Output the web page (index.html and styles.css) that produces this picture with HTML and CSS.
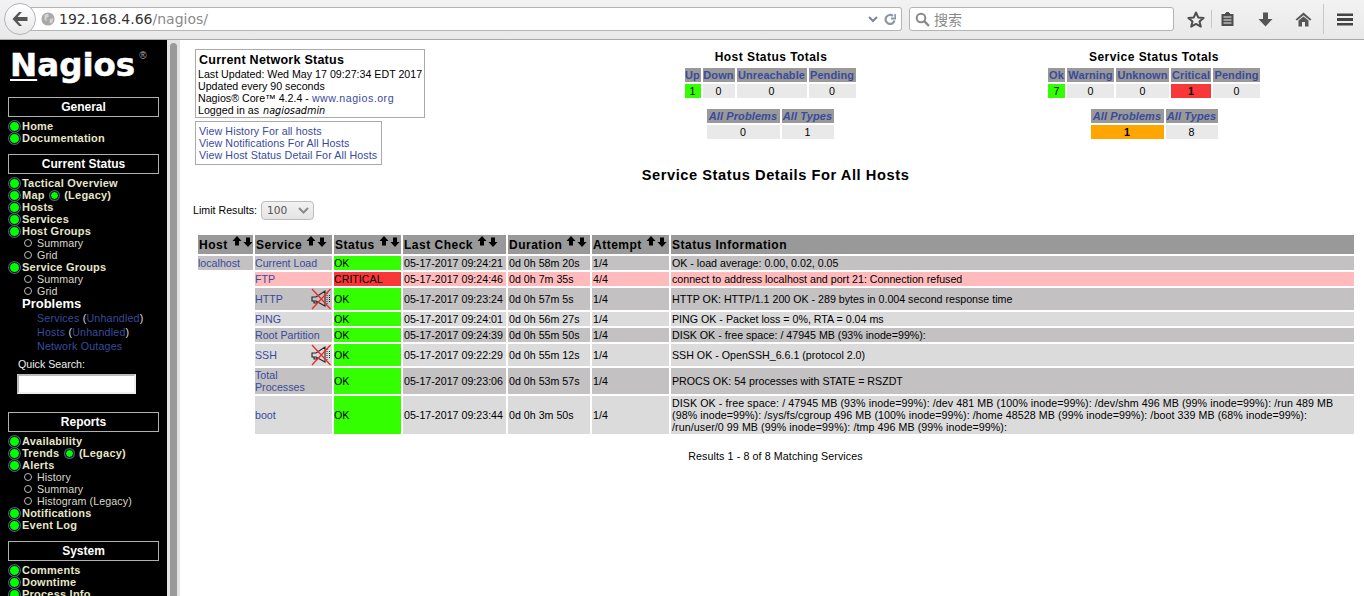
FILE: index.html
```html
<!DOCTYPE html>
<html lang="en">
<head>
<meta charset="utf-8">
<title>Nagios Core</title>
<link rel="stylesheet" href="styles.css">
</head>
<body>
<svg class="defs" width="0" height="0" aria-hidden="true">
  <defs>
    <symbol id="up" viewBox="0 0 10 10"><path d="M5 0 L9.5 5 H7 V9.5 H3 V5 H0.5 Z"/></symbol>
    <symbol id="down" viewBox="0 0 10 10"><path d="M3 0.5 H7 V5 H9.5 L5 10 L0.5 5 H3 Z"/></symbol>
    <symbol id="mute" viewBox="0 0 20 22">
      <path d="M1 9 H5 L14 3 V18 L5 13 H1 Z M3 13 V15 H6 V13" fill="none" stroke="#262626" stroke-width="1.1"/>
      <path d="M16 5 V17 M18.5 7 V15" fill="none" stroke="#262626" stroke-width="1" stroke-dasharray="1 1"/>
      <path d="M1 1 L19.5 21 M19.5 1 L1 21" stroke="#f02828" stroke-width="1.3" fill="none"/>
    </symbol>
  </defs>
</svg>

<header class="toolbar">
  <div class="backbtn">
    <svg width="18" height="16" viewBox="0 0 18 16"><path d="M8 1 L1.5 8 L8 15 H11 L6.5 10 H16.5 V6 H6.5 L11 1 Z" fill="#555"/></svg>
  </div>
  <div class="urlbar">
    <svg class="globe" width="14" height="14" viewBox="0 0 16 16"><circle cx="8" cy="8" r="7.5" fill="#a9a9a9"/><path d="M4 3 L8 2 L9 5 L6 7 L7 10 L4 9 Z M10 8 L14 7 L13 12 L10 13 Z" fill="#d4d4d4"/></svg>
    <span class="host">192.168.4.66</span><span class="path">/nagios/</span>
    <span class="urlend">
      <svg width="10" height="7" viewBox="0 0 10 7"><path d="M1 1 L5 5 L9 1" fill="none" stroke="#7d8691" stroke-width="2"/></svg>
      <svg width="12" height="13" viewBox="0 0 12 13"><path d="M10.5 7.5 A4.5 4.5 0 1 1 9 3 M7 5.5 H11.5 V1" fill="none" stroke="#8b97a6" stroke-width="2.2"/></svg>
    </span>
  </div>
  <div class="searchbar">
    <svg width="15" height="15" viewBox="0 0 15 15"><circle cx="6" cy="6" r="4.3" fill="none" stroke="#8a8a8a" stroke-width="2"/><path d="M9.2 9.2 L14 14" stroke="#8a8a8a" stroke-width="2.4"/></svg>
    <span>搜索</span>
  </div>
  <div class="tools">
    <svg class="t-star" width="18" height="17" viewBox="0 0 18 17"><path d="M9 1.5 L11.2 6.4 L16.6 6.9 L12.5 10.4 L13.8 15.6 L9 12.9 L4.2 15.6 L5.5 10.4 L1.4 6.9 L6.8 6.4 Z" fill="none" stroke="#4e4e4e" stroke-width="2" stroke-linejoin="round"/></svg>
    <i class="sep"></i>
    <svg class="t-clip" width="15" height="16" viewBox="0 0 15 16"><path d="M5 2 H6 V1 H9 V2 H10 V3 H13.5 V15 H1.5 V3 H5 Z" fill="#4e4e4e"/><path d="M3.5 6 H11.5 M3.5 9 H11.5 M3.5 12 H11.5" stroke="#eee" stroke-width="1"/></svg>
    <svg class="t-down" width="15" height="15" viewBox="0 0 15 15"><path d="M5 0.5 H10 V7 H14.5 L7.5 14.5 L0.5 7 H5 Z" fill="#555"/></svg>
    <svg class="t-home" width="17" height="15" viewBox="0 0 17 15"><path d="M8.5 0.5 L16.5 7.5 L15 8.5 L8.5 3.2 L2 8.5 L0.5 7.5 Z" fill="#555"/><path d="M3.5 8.5 L8.5 4.6 L13.5 8.5 V14.5 H10 V10 H7 V14.5 H3.5 Z" fill="#555"/></svg>
    <i class="sep tall"></i>
    <svg class="t-menu" width="16" height="13" viewBox="0 0 16 13"><path d="M0 0.5 H16 V3 H0 Z M0 5 H16 V8 H0 Z M0 10 H16 V12.5 H0 Z" fill="#444"/></svg>
  </div>
</header>

<div class="window">
  <nav class="sidebar">
    <div class="logo"><span class="logo-name"><span class="logo-n">N</span>agios</span><span class="logo-reg">®</span></div>

    <div class="navhead first">General</div>
    <ul class="navlist">
      <li class="bright"><a href="#">Home</a></li>
      <li class="bright"><a href="#">Documentation</a></li>
    </ul>

    <div class="navhead">Current Status</div>
    <ul class="navlist">
      <li class="bright"><a href="#">Tactical Overview</a></li>
      <li class="bright"><a href="#">Map</a> <b class="dot"></b> <a href="#">(Legacy)</a></li>
      <li class="bright"><a href="#">Hosts</a></li>
      <li class="bright"><a href="#">Services</a></li>
      <li class="bright"><a href="#">Host Groups</a></li>
      <li class="sub"><a href="#">Summary</a></li>
      <li class="sub"><a href="#">Grid</a></li>
      <li class="bright"><a href="#">Service Groups</a></li>
      <li class="sub"><a href="#">Summary</a></li>
      <li class="sub"><a href="#">Grid</a></li>
    </ul>
    <div class="problems">Problems</div>
    <ul class="plist">
      <li><a href="#">Services</a> (<a href="#">Unhandled</a>)</li>
      <li><a href="#">Hosts</a> (<a href="#">Unhandled</a>)</li>
      <li><a href="#">Network Outages</a></li>
    </ul>
    <div class="qs-label">Quick Search:</div>
    <input class="qs-input" type="text" aria-label="Quick Search">

    <div class="navhead reports">Reports</div>
    <ul class="navlist">
      <li class="bright"><a href="#">Availability</a></li>
      <li class="bright"><a href="#">Trends</a> <b class="dot"></b> <a href="#">(Legacy)</a></li>
      <li class="bright"><a href="#">Alerts</a></li>
      <li class="sub"><a href="#">History</a></li>
      <li class="sub"><a href="#">Summary</a></li>
      <li class="sub"><a href="#">Histogram (Legacy)</a></li>
      <li class="bright"><a href="#">Notifications</a></li>
      <li class="bright"><a href="#">Event Log</a></li>
    </ul>

    <div class="navhead system">System</div>
    <ul class="navlist">
      <li class="bright"><a href="#">Comments</a></li>
      <li class="bright"><a href="#">Downtime</a></li>
      <li class="bright"><a href="#">Process Info</a></li>
    </ul>
  </nav>
  <div class="scrollbar"><div class="thumb"></div></div>

  <main class="main">
    <section class="top">
      <div class="leftcol">
        <div class="infobox">
          <div class="infotitle">Current Network Status</div>
          <div>Last Updated: Wed May 17 09:27:34 EDT 2017</div>
          <div>Updated every 90 seconds</div>
          <div>Nagios® Core™ 4.2.4 - <a href="#">www.nagios.org</a></div>
          <div>Logged in as <i class="user">nagiosadmin</i></div>
        </div>
        <div class="linkbox">
          <div><a href="#">View History For all hosts</a></div>
          <div><a href="#">View Notifications For All Hosts</a></div>
          <div><a href="#">View Host Status Detail For All Hosts</a></div>
        </div>
      </div>

      <div class="totals">
        <div class="totals-title">Host Status Totals</div>
        <table class="tot tot-host">
          <tr><th><a href="#">Up</a></th><th><a href="#">Down</a></th><th><a href="#">Unreachable</a></th><th><a href="#">Pending</a></th></tr>
          <tr><td class="ok">1</td><td>0</td><td>0</td><td>0</td></tr>
        </table>
        <table class="tot tot-all">
          <tr><th><a href="#">All Problems</a></th><th><a href="#">All Types</a></th></tr>
          <tr><td>0</td><td>1</td></tr>
        </table>
      </div>

      <div class="totals">
        <div class="totals-title">Service Status Totals</div>
        <table class="tot tot-svc">
          <tr><th><a href="#">Ok</a></th><th><a href="#">Warning</a></th><th><a href="#">Unknown</a></th><th><a href="#">Critical</a></th><th><a href="#">Pending</a></th></tr>
          <tr><td class="ok">7</td><td>0</td><td>0</td><td class="crit"><b>1</b></td><td>0</td></tr>
        </table>
        <table class="tot tot-all">
          <tr><th><a href="#">All Problems</a></th><th><a href="#">All Types</a></th></tr>
          <tr><td class="warn"><b>1</b></td><td>8</td></tr>
        </table>
      </div>
    </section>

    <h1 class="pagetitle">Service Status Details For All Hosts</h1>

    <div class="limit">
      <label for="lim">Limit Results:</label>
      <div class="fakeselect" id="lim"><span>100</span><svg width="11" height="7" viewBox="0 0 11 7"><path d="M1 1 L5.5 5.5 L10 1" fill="none" stroke="#8a8a8a" stroke-width="2"/></svg></div>
    </div>

    <table class="status">
      <thead>
        <tr>
          <th class="c-host">Host <span class="sort"><svg><use href="#up"/></svg><svg><use href="#down"/></svg></span></th>
          <th class="c-svc">Service <span class="sort"><svg><use href="#up"/></svg><svg><use href="#down"/></svg></span></th>
          <th class="c-st">Status <span class="sort"><svg><use href="#up"/></svg><svg><use href="#down"/></svg></span></th>
          <th class="c-lc">Last Check <span class="sort"><svg><use href="#up"/></svg><svg><use href="#down"/></svg></span></th>
          <th class="c-du">Duration <span class="sort"><svg><use href="#up"/></svg><svg><use href="#down"/></svg></span></th>
          <th class="c-at">Attempt <span class="sort"><svg><use href="#up"/></svg><svg><use href="#down"/></svg></span></th>
          <th class="c-in">Status Information</th>
        </tr>
      </thead>
      <tbody>
        <tr class="odd r14">
          <td class="hostcell"><a href="#">localhost</a></td>
          <td><a href="#">Current Load</a></td><td class="ok">OK</td><td>05-17-2017 09:24:21</td><td>0d 0h 58m 20s</td><td>1/4</td><td>OK - load average: 0.00, 0.02, 0.05</td>
        </tr>
        <tr class="bad r14">
          <td class="blank"></td>
          <td><a href="#">FTP</a></td><td class="crit">CRITICAL</td><td>05-17-2017 09:24:46</td><td>0d 0h 7m 35s</td><td>4/4</td><td>connect to address localhost and port 21: Connection refused</td>
        </tr>
        <tr class="odd r22">
          <td class="blank"></td>
          <td><div class="svcflex"><a href="#">HTTP</a><svg class="mute"><use href="#mute"/></svg></div></td><td class="ok">OK</td><td>05-17-2017 09:23:24</td><td>0d 0h 57m 5s</td><td>1/4</td><td>HTTP OK: HTTP/1.1 200 OK - 289 bytes in 0.004 second response time</td>
        </tr>
        <tr class="even r14">
          <td class="blank"></td>
          <td><a href="#">PING</a></td><td class="ok">OK</td><td>05-17-2017 09:24:01</td><td>0d 0h 56m 27s</td><td>1/4</td><td>PING OK - Packet loss = 0%, RTA = 0.04 ms</td>
        </tr>
        <tr class="odd r14">
          <td class="blank"></td>
          <td><a href="#">Root Partition</a></td><td class="ok">OK</td><td>05-17-2017 09:24:39</td><td>0d 0h 55m 50s</td><td>1/4</td><td>DISK OK - free space: / 47945 MB (93% inode=99%):</td>
        </tr>
        <tr class="even r22">
          <td class="blank"></td>
          <td><div class="svcflex"><a href="#">SSH</a><svg class="mute"><use href="#mute"/></svg></div></td><td class="ok">OK</td><td>05-17-2017 09:22:29</td><td>0d 0h 55m 12s</td><td>1/4</td><td>SSH OK - OpenSSH_6.6.1 (protocol 2.0)</td>
        </tr>
        <tr class="odd r26">
          <td class="blank"></td>
          <td><a href="#">Total<br>Processes</a></td><td class="ok">OK</td><td>05-17-2017 09:23:06</td><td>0d 0h 53m 57s</td><td>1/4</td><td>PROCS OK: 54 processes with STATE = RSZDT</td>
        </tr>
        <tr class="even r38">
          <td class="blank"></td>
          <td><a href="#">boot</a></td><td class="ok">OK</td><td>05-17-2017 09:23:44</td><td>0d 0h 3m 50s</td><td>1/4</td><td class="long">DISK OK - free space: / 47945 MB (93% inode=99%): /dev 481 MB (100% inode=99%): /dev/shm 496 MB (99% inode=99%): /run 489 MB<br>(98% inode=99%): /sys/fs/cgroup 496 MB (100% inode=99%): /home 48528 MB (99% inode=99%): /boot 339 MB (68% inode=99%):<br>/run/user/0 99 MB (99% inode=99%): /tmp 496 MB (99% inode=99%):</td>
        </tr>
      </tbody>
    </table>

    <div class="results">Results 1 - 8 of 8 Matching Services</div>
  </main>
</div>
</body>
</html>
```

FILE: styles.css
```css
* { box-sizing: border-box; }
html, body { margin: 0; padding: 0; height: 100%; overflow: hidden; background: #fff; }
body { font-family: "Liberation Sans", Arial, sans-serif; font-size: 10.67px; color: #000; }
.defs { position: absolute; }
a { color: #3a4a9e; text-decoration: none; }

/* browser chrome */
.toolbar { height: 40px; display: flex; align-items: center; background: linear-gradient(#f2f2f2, #e9e9e9); border-bottom: 1px solid #a8a8a8; padding: 0 0 1px 4px; position: relative; }
.backbtn { width: 32px; height: 32px; border-radius: 50%; background: linear-gradient(#fff, #e8e8e8); border: 1px solid #aeb4bd; display: flex; align-items: center; justify-content: center; position: relative; z-index: 1; flex: none; }
.urlbar { margin-left: -6px; width: 872px; height: 24px; background: #fff; border: 1px solid #b4b4b4; border-left: 0; border-radius: 0 3px 3px 0; display: flex; align-items: center; padding-left: 11px; font-family: "DejaVu Sans", sans-serif; font-size: 14px; flex: none; }
.globe { margin-right: 3px; flex: none; }
.host { color: #333; margin-left: 1px; }
.path { color: #8a8a8a; }
.urlend { margin-left: auto; display: flex; align-items: center; gap: 6px; padding-right: 5px; }
.searchbar { margin-left: 7px; width: 265px; height: 24px; background: #fff; border: 1px solid #b4b4b4; border-radius: 3px; display: flex; align-items: center; gap: 4px; padding-left: 5px; color: #8a8a8a; font-family: "Noto Sans CJK SC", sans-serif; font-size: 14px; flex: none; }
.tools { flex: 1; display: flex; align-items: center; position: relative; height: 30px; }
.tools svg { flex: none; }
.t-star { margin-left: 13px; }
.sep { width: 1px; height: 18px; background: #c8c8c8; margin-left: 6px; flex: none; }
.sep.tall { height: 30px; margin-left: 11px; }
.t-clip { margin-left: 8px; }
.t-down { margin-left: 23px; }
.t-home { margin-left: 22px; }
.t-menu { margin-left: 13px; }

/* window */
.window { display: flex; height: 556px; overflow: hidden; }
.sidebar { width: 167px; flex: none; background: #000; color: #e6e6d8; height: 556px; overflow: hidden; padding: 0 8px; }
.scrollbar { width: 13px; flex: none; background: #e4e4e4; padding: 3px 3px 0 3px; }
.thumb { background: #9a9a9a; height: 553px; border-radius: 4px 4px 0 0; }

.logo { height: 57px; color: #fff; display: flex; align-items: flex-start; padding: 3px 0 0 2px; }
.logo-name { font-family: "DejaVu Sans", sans-serif; font-weight: 700; font-size: 32.5px; line-height: 44px; white-space: nowrap; -webkit-text-stroke: 0.5px #fff; }
.logo-n { text-decoration: underline; text-decoration-thickness: 2px; text-underline-offset: 3px; }
.logo-reg { font-size: 10px; margin: 7px 0 0 4px; color: #aaa; }

.navhead { border: 1px solid #b0b0b0; height: 20px; line-height: 18px; text-align: center; color: #fff; font-weight: 700; font-size: 12px; }
.navlist { list-style: none; margin: 3px 0 0; padding: 0; }
.navlist + .navhead { margin-top: 10px; }
.navlist li { height: 12px; line-height: 12px; white-space: nowrap; }
.navlist .bright { font-weight: 700; padding-left: 14px; position: relative; font-size: 11px; letter-spacing: 0.22px; }
.navlist .bright a { color: #e6e6c8; }
.navlist .bright::before, .dot { content: ""; border-radius: 50%; background: #0f0; box-shadow: 0 0 0 1px #555a8a; }
.navlist .bright::before { position: absolute; left: 1px; top: 1px; width: 9px; height: 9px; border: 1px solid #000; }
.dot { display: inline-block; width: 9px; height: 9px; border: 1px solid #000; vertical-align: -1px; margin: 0 2px; }
.navlist .sub { padding-left: 29px; position: relative; letter-spacing: 0.1px; }
.navlist .sub a { color: #d8d8c8; }
.navlist .sub::before { content: ""; position: absolute; left: 16px; top: 2px; width: 6px; height: 6px; border-radius: 50%; border: 1.5px solid #bbb; }
.problems { color: #fff; font-weight: 700; font-size: 13px; line-height: 16px; padding-left: 14px; margin-top: -1px; }
.plist { list-style: none; margin: -1px 0 0; padding: 0 0 0 29px; color: #ddd; letter-spacing: 0.2px; }
.plist li { height: 14px; line-height: 14px; white-space: nowrap; }
.qs-label { margin: 4px 0 0 10px; color: #eee; line-height: 14px; }
.qs-input { display: block; margin: 3px 0 0 9px; width: 119px; height: 20px; background: #fff; border: 2px solid #bbb; border-right-color: #eee; border-bottom-color: #eee; padding: 0; }
.navhead.reports { margin-top: 18px; }
.navhead.system { margin-top: 10px; }

/* main */
.main { flex: 1; min-width: 0; background: #fff; padding: 9px 10px 0 13px; }
.top { display: grid; grid-template-columns: 303px 220px 220px; column-gap: 163px; padding-left: 2px; }
.infobox { border: 1px solid #aaa; width: 230px; padding: 3px 2px 2px; line-height: 12px; height: 69px; white-space: nowrap; }
.infobox a { letter-spacing: 0.5px; }
.infotitle { font-weight: 700; font-size: 12.5px; line-height: 15px; padding-left: 1px; letter-spacing: 0.25px; }
.user { font-family: "DejaVu Sans", sans-serif; font-size: 9.7px; margin-left: 1px; }
.linkbox { border: 1px solid #aaa; width: 187px; margin-top: 3px; padding: 3px; line-height: 12px; height: 44px; white-space: nowrap; letter-spacing: 0.1px; }
.totals { display: flex; flex-direction: column; align-items: center; }
.totals-title { font-weight: 700; font-size: 12px; line-height: 14px; height: 17px; margin-top: 1px; letter-spacing: 0.45px; }
.tot { border-collapse: separate; border-spacing: 2px; table-layout: fixed; margin-top: -1px; }
.tot th { background: #999; height: 14px; padding: 0; font-size: 11px; line-height: 14px; overflow: hidden; white-space: nowrap; letter-spacing: 0.1px; }
.tot td { background: #e9e9e9; height: 14px; padding: 0; text-align: center; line-height: 14px; font-size: 10.67px; }
.tot-host { width: 175px; }
.tot-host th:nth-child(1) { width: 16px; } .tot-host th:nth-child(2) { width: 32px; } .tot-host th:nth-child(3) { width: 70px; } .tot-host th:nth-child(4) { width: 47px; }
.tot-svc { width: 216px; }
.tot-svc th:nth-child(1) { width: 17px; } .tot-svc th:nth-child(2) { width: 47px; } .tot-svc th:nth-child(3) { width: 53px; } .tot-svc th:nth-child(4) { width: 40px; } .tot-svc th:nth-child(5) { width: 47px; }
.tot.tot-all { width: 131px; margin-top: 7px; }
.tot-all th { font-style: italic; }
.tot-all th:nth-child(1) { width: 73px; } .tot-all th:nth-child(2) { width: 52px; }
.totals:nth-child(2) .tot { margin-right: 2px; }
.tot td.ok, .status td.ok { background: #33ff00; }
.tot td.crit, .status td.crit { background: #f83838; }
.tot td.warn { background: #ffa500; }

.pagetitle { font-size: 14.67px; line-height: 18px; font-weight: 700; text-align: center; height: 18px; margin: 1px 0 0 4px; letter-spacing: 0.55px; }
.limit { display: flex; align-items: center; gap: 4px; margin: 16px 0 0; height: 20px; }
.fakeselect { width: 53px; height: 19px; border: 1px solid #bcbcbc; border-radius: 4px; background: linear-gradient(#f2f2f2, #e4e4e4); display: flex; align-items: center; justify-content: space-between; padding: 0 4px 0 5px; color: #555; font-family: "DejaVu Sans", sans-serif; font-size: 10.67px; }

.status { border-collapse: separate; border-spacing: 2px; table-layout: fixed; width: 1160px; margin: 13px 0 0 3px; }
.status th { background: #999; height: 19px; text-align: left; padding: 2px 0 0 1px; font-size: 12px; line-height: 17px; white-space: nowrap; letter-spacing: 0.5px; }
.c-host { width: 55px; } .c-svc { width: 77px; } .c-st { width: 67px; } .c-lc { width: 103px; } .c-du { width: 82px; } .c-at { width: 77px; }
.sort { display: inline-flex; gap: 1px; vertical-align: 3px; height: 11px; margin-block: -4px; }
.sort svg { width: 10px; height: 10px; display: block; }
.sort svg + svg { margin-top: 1px; }
.status td { padding: 0 1px; line-height: 12px; vertical-align: middle; height: 14px; }
.status td:nth-child(-n+3) { padding: 0; }
.status td.long { letter-spacing: 0.08px; }
.status tr.r14 td { height: 14px; }
.status tr.r22 td { height: 22px; }
.status tr.r26 td { height: 26px; }
.status tr.r38 td { height: 38px; }
.status tr.odd td { background: #c3c1c2; }
.status tr.even td { background: #dbdbdb; }
.status tr.bad td { background: #ffbbbb; }
.status tr td.blank { background: transparent; }
.status tr td.hostcell { background: #c3c1c2; }
.status tr td.ok { background: #33ff00; }
.status tr td.crit { background: #f83838; }
.svcflex { display: flex; align-items: center; justify-content: space-between; padding-right: 1px; }
.mute { width: 20px; height: 22px; display: block; flex: none; }
.results { text-align: center; margin: 13px 0 0 4px; line-height: 14px; letter-spacing: 0.11px; }
```
